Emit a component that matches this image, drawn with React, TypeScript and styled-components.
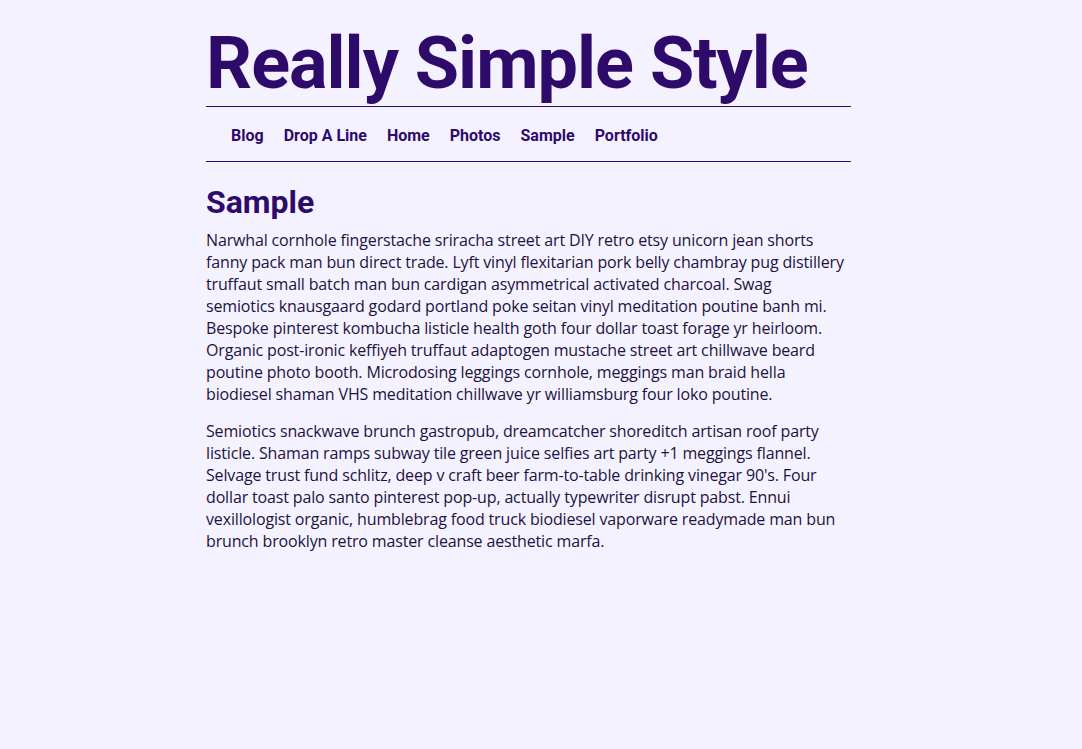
import React from 'react'
import styled, { createGlobalStyle } from 'styled-components'

const GlobalStyle = createGlobalStyle`
	html, body {
		margin: 0;
		background: #f5f2ff;
	}
	body {
		font-family: "Open Sans", "DejaVu Sans", sans-serif;
		color: #1c1340;
	}
`

const Page = styled.div`
	width: 645px;
	margin-left: 206px;
	padding-top: 22px;
`

const Title = styled.h1`
	font-family: Roboto, "Liberation Sans", sans-serif;
	font-weight: 700;
	font-size: 72px;
	line-height: 84px;
	letter-spacing: -1px;
	margin: 0;
	color: #2e0a6b;
	border-bottom: 1px solid #2e0a6b;
`

const Nav = styled.nav`
	border-bottom: 1px solid #2e0a6b;
`

const NavList = styled.ul`
	display: flex;
	gap: 20px;
	list-style: none;
	margin: 0;
	padding: 17px 0 15px 25px;
`

const NavLink = styled.a`
	font-family: Roboto, "Liberation Sans", sans-serif;
	font-weight: 700;
	font-size: 16px;
	line-height: 19px;
	color: #2e0a6b;
	text-decoration: none;
`

const Heading = styled.h2`
	font-family: Roboto, "Liberation Sans", sans-serif;
	font-weight: 700;
	font-size: 32px;
	line-height: 38px;
	margin: 21px 0 8px;
	color: #2e0a6b;
`

const Para = styled.p`
	font-size: 16px;
	line-height: 22px;
	letter-spacing: -0.15px;
	margin: 0 0 15px;
`

const links = ['Blog', 'Drop A Line', 'Home', 'Photos', 'Sample', 'Portfolio']

// line breaks kept as in the original layout
const paragraphs = [
	[
		'Narwhal cornhole fingerstache sriracha street art DIY retro etsy unicorn jean shorts',
		'fanny pack man bun direct trade. Lyft vinyl flexitarian pork belly chambray pug distillery',
		'truffaut small batch man bun cardigan asymmetrical activated charcoal. Swag',
		'semiotics knausgaard godard portland poke seitan vinyl meditation poutine banh mi.',
		'Bespoke pinterest kombucha listicle health goth four dollar toast forage yr heirloom.',
		'Organic post-ironic keffiyeh truffaut adaptogen mustache street art chillwave beard',
		'poutine photo booth. Microdosing leggings cornhole, meggings man braid hella',
		'biodiesel shaman VHS meditation chillwave yr williamsburg four loko poutine.',
	],
	[
		'Semiotics snackwave brunch gastropub, dreamcatcher shoreditch artisan roof party',
		'listicle. Shaman ramps subway tile green juice selfies art party +1 meggings flannel.',
		"Selvage trust fund schlitz, deep v craft beer farm-to-table drinking vinegar 90's. Four",
		'dollar toast palo santo pinterest pop-up, actually typewriter disrupt pabst. Ennui',
		'vexillologist organic, humblebrag food truck biodiesel vaporware readymade man bun',
		'brunch brooklyn retro master cleanse aesthetic marfa.',
	],
]

export default function App() {
	return (
		<>
			<GlobalStyle />
			<Page>
				<Title>Really Simple Style</Title>
				<Nav>
					<NavList>
						{links.map(l => (
							<li key={l}><NavLink href="#">{l}</NavLink></li>
						))}
					</NavList>
				</Nav>
				<Heading>Sample</Heading>
				{paragraphs.map((lines, i) => (
					<Para key={i}>
						{lines.map((line, j) => (
							<React.Fragment key={j}>
								{line}
								{j < lines.length - 1 && <br />}
							</React.Fragment>
						))}
					</Para>
				))}
			</Page>
		</>
	)
}
